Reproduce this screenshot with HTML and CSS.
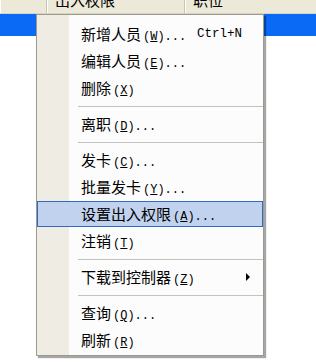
FILE: index.html
```html
<!DOCTYPE html>
<html lang="zh-CN">
<head>
    <meta charset="UTF-8">
    <title>人员菜单</title>
    <link rel="stylesheet" href="styles.css">
</head>
<body>
    <div class="list-header">
        <div class="col col-first"></div>
        <div class="col col-access"><span>出入权限</span></div>
        <div class="col col-post"><span>职位</span></div>
    </div>
    <div class="row selected"></div>
    <div class="row"></div>

    <div class="menu">
        <div class="item"><span class="label">新增人员<span class="en">(<u>W</u>)...</span></span><span class="shortcut">Ctrl+N</span></div>
        <div class="item"><span class="label">编辑人员<span class="en">(<u>E</u>)...</span></span></div>
        <div class="item"><span class="label">删除<span class="en">(<u>X</u>)</span></span></div>
        <div class="sep"></div>
        <div class="item"><span class="label">离职<span class="en">(<u>D</u>)...</span></span></div>
        <div class="sep"></div>
        <div class="item"><span class="label">发卡<span class="en">(<u>C</u>)...</span></span></div>
        <div class="item"><span class="label">批量发卡<span class="en">(<u>Y</u>)...</span></span></div>
        <div class="item active"><span class="label">设置出入权限<span class="en">(<u>A</u>)...</span></span></div>
        <div class="item"><span class="label">注销<span class="en">(<u>T</u>)</span></span></div>
        <div class="sep"></div>
        <div class="item"><span class="label">下载到控制器<span class="en">(<u>Z</u>)</span></span><span class="arrow"></span></div>
        <div class="sep"></div>
        <div class="item"><span class="label">查询<span class="en">(<u>Q</u>)...</span></span></div>
        <div class="item"><span class="label">刷新<span class="en">(<u>R</u>)</span></span></div>
    </div>
</body>
</html>
```

FILE: styles.css
```css
body {
    margin: 0;
    width: 316px;
    height: 362px;
    overflow: hidden;
    background-color: #FFFFFF;
    font-family: "Noto Sans CJK SC", "Liberation Sans", sans-serif;
    font-size: 15px;
    color: #000000;
    position: relative;
}

.list-header {
    display: flex;
    height: 13px;
    background-color: #ECE9D8;
    border-bottom: 1px solid #D8D4C4;
    overflow: hidden;
}

.col {
    height: 13px;
    border-right: 1px solid #C7C4B3;
    box-shadow: inset 1px 0 0 #FFFFFF;
    box-sizing: border-box;
}

.col span {
    display: block;
    line-height: 15px;
    margin-top: -8px;
    padding-left: 8px;
}

.col-first {
    width: 47px;
}

.col-access {
    width: 138px;
}

.col-post {
    flex-grow: 1;
    border-right: none;
}

.row {
    height: 22px;
}

.row.selected {
    background-color: #0A6AF5;
}

/* context menu, drawn over the list */
.menu {
    position: absolute;
    left: 36px;
    top: 14px;
    width: 228px;
    box-sizing: border-box;
    padding: 5px 0 1px;
    border: 1px solid #9C9A8C;
    background: linear-gradient(to right, #EFEDE3 0, #EFEDE3 32px, #FCFCFC 32px);
    box-shadow: 2px 2px 1px rgba(0, 0, 0, 0.35);
}

.item {
    display: flex;
    align-items: center;
    box-sizing: border-box;
    height: 26px;
    margin: 1px 0;
    padding-left: 43px;
    padding-right: 8px;
    border: 1px solid transparent;
    white-space: nowrap;
}

.item.active {
    background-color: #C1D2EE;
    border-color: #316AC5;
}

.label {
    flex-grow: 1;
    margin-top: -1px;
}

.en {
    font-family: "Liberation Mono", monospace;
    font-size: 12px;
    margin-left: 2px;
}

.shortcut {
    width: 57px;
    font-family: "Liberation Mono", monospace;
    font-size: 12.5px;
}

.arrow {
    width: 0;
    height: 0;
    margin-right: 4px;
    border-top: 4px solid transparent;
    border-bottom: 4px solid transparent;
    border-left: 4px solid #000000;
}

.sep {
    height: 8px;
    display: flex;
    align-items: center;
    padding-left: 41px;
}

.sep::after {
    content: "";
    flex-grow: 1;
    height: 1px;
    background-color: #C5C2B8;
}
```
